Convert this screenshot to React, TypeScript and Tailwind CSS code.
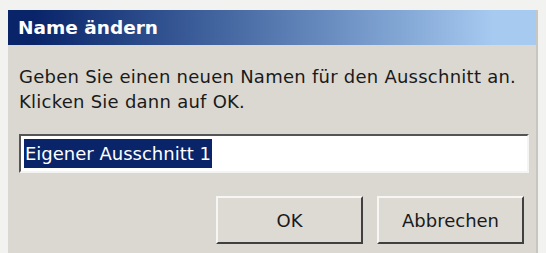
export default function App() {
  return (
    <div className="h-[253px] w-[546px] overflow-hidden bg-[#f2f2f0] px-[8px] pt-[10px] font-['DejaVu_Sans',sans-serif]">
      <div className="flex h-[243px] flex-col border-r-2 border-r-[#c8c6c0] bg-[#dbd8d1]">
        <div className="flex h-[35px] items-center bg-gradient-to-r from-[#0a246a] from-[5%] to-[#a6caf0] to-[92%] pl-[10px]">
          <span className="text-[18.5px] font-bold text-white">Name ändern</span>
        </div>
        <div className="flex flex-col px-[11px] pt-[19px]">
          <p className="text-[18px] leading-[25px] tracking-[0.25px] text-[#1a1a1a]">
            Geben Sie einen neuen Namen für den Ausschnitt an.
            <br />
            Klicken Sie dann auf OK.
          </p>
          <div className="mt-[20px] flex h-[39px] w-[510px] items-center border-2 border-b-[#f4f4f2] border-l-[#555] border-r-[#f4f4f2] border-t-[#555] bg-white pl-[3px]">
            <span className="bg-[#0a246a] px-[1px] text-[18px] leading-[29px] text-white">Eigener Ausschnitt 1</span>
          </div>
          <div className="mt-[23px] flex justify-end gap-[14px] pr-[1px]">
            <button
              type="button"
              className="flex h-[48px] w-[147px] items-center justify-center border-2 border-b-[#404040] border-l-[#f6f6f4] border-r-[#404040] border-t-[#f6f6f4] bg-[#dddad3] text-[18px] text-[#1a1a1a]"
            >
              OK
            </button>
            <button
              type="button"
              className="flex h-[48px] w-[147px] items-center justify-center border-2 border-b-[#404040] border-l-[#f6f6f4] border-r-[#404040] border-t-[#f6f6f4] bg-[#dddad3] text-[18px] text-[#1a1a1a]"
            >
              Abbrechen
            </button>
          </div>
        </div>
      </div>
    </div>
  );
}
